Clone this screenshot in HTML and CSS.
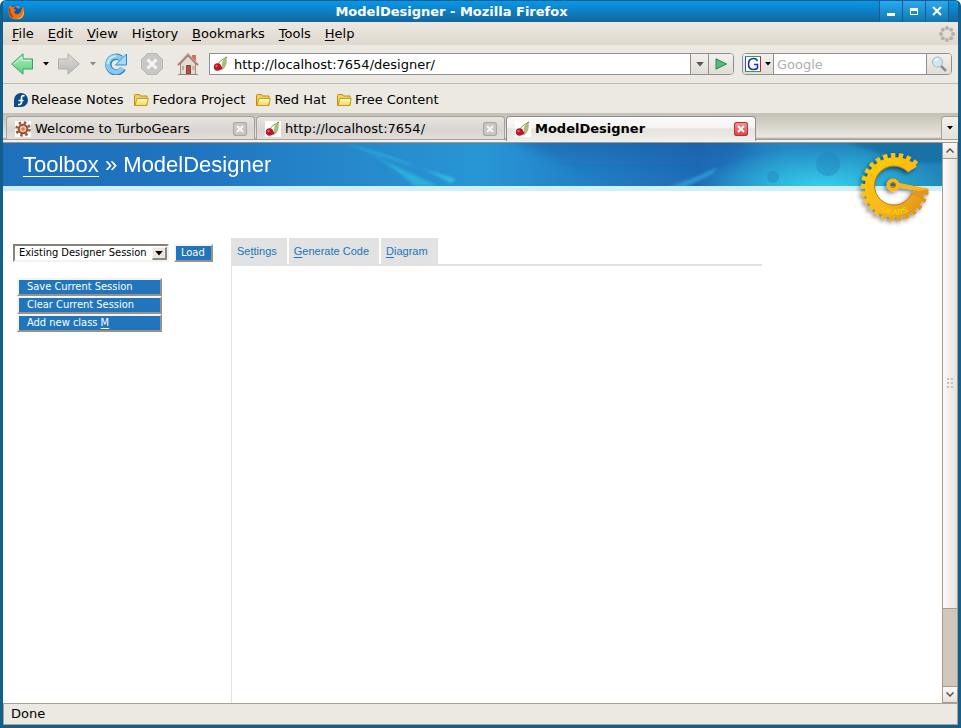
FILE: index.html
```html
<!DOCTYPE html>
<html lang="en">
<head>
  <meta charset="UTF-8">
  <meta name="viewport" content="width=device-width, initial-scale=1.0">
  <title>ModelDesigner - Mozilla Firefox</title>
  <link rel="stylesheet" href="styles.css">
</head>
<body>
  <!-- shared icons -->
  <svg class="defs" width="0" height="0" aria-hidden="true">
    <defs>
      <linearGradient id="green" x1="0" y1="0" x2="0" y2="1"><stop offset="0" stop-color="#a9f0bd"/><stop offset="1" stop-color="#5fce84"/></linearGradient>
      <linearGradient id="grey" x1="0" y1="0" x2="0" y2="1"><stop offset="0" stop-color="#dddcd9"/><stop offset="1" stop-color="#b9b8b5"/></linearGradient>
      <linearGradient id="folderFill" x1="0" y1="0" x2="0" y2="1"><stop offset="0" stop-color="#fffbd0"/><stop offset="1" stop-color="#f3d75c"/></linearGradient>
      <linearGradient id="gold" gradientUnits="userSpaceOnUse" x1="10" y1="10" x2="70" y2="66"><stop offset="0" stop-color="#ffc80c"/><stop offset="0.55" stop-color="#fdb913"/><stop offset="1" stop-color="#d98a1f"/></linearGradient>
      <filter id="shadow" x="-20%" y="-20%" width="150%" height="150%"><feDropShadow dx="-2" dy="2" stdDeviation="2" flood-color="#000" flood-opacity="0.5"/></filter>
      <symbol id="folder" viewBox="0 0 16 14">
        <path d="M1.500 12.500V2.500q0-1 1-1h4l1 1.500h6.500v9.500z" fill="#f2d35a" stroke="#c08a10"/>
        <path d="M2 12.500 4 5.500h11.300l-1.800 7z" fill="url(#folderFill)" stroke="#c99b17"/>
      </symbol>
      <symbol id="cherry" viewBox="0 0 16 16">
        <path d="M4.500 8.500C6 6 9 3.500 13 1.500" fill="none" stroke="#8f8a55" stroke-width="1"/>
        <path d="M13 1.500C9.500 4 8.500 8 9.500 13.500 13 10.500 14 6 13 1.500z" fill="#a9c077" stroke="#8aa552" stroke-width=".5"/>
        <path d="M12.500 2 13.500.500l1 1z" fill="#8b4a35"/>
        <circle cx="4.500" cy="11" r="3.700" fill="#c11425"/>
        <circle cx="7.700" cy="12" r="1.700" fill="#b51828"/>
        <circle cx="3.500" cy="10" r="1.200" fill="#e0606b"/>
      </symbol>
      <symbol id="tabclose" viewBox="0 0 14 14">
        <path d="M4 4l6 6M10 4l-6 6" fill="none" stroke="#f7f4f2" stroke-width="2.200"/>
      </symbol>
      <symbol id="caret" viewBox="0 0 6 4"><path d="M0 0h6L3 3.500z" fill="currentColor"/></symbol>
    </defs>
  </svg>

  <div class="window">
    <header class="titlebar">
      <svg class="fox" viewBox="0 0 16 16" width="16" height="16">
        <circle cx="8.500" cy="7" r="6.300" fill="#1a4f9c"/>
        <path d="M6 2q4-2 7 1l-2 2-2-1z" fill="#4a9be0"/>
        <path d="M1 3 2 1.500 4 3q2-1 3 0L5.500 5q2 0 2.500 1L6 8q1 3 4 2 3-1 3-4 2-2 1-4 3 3 2 7-2 6.500-8 6.500T.5 9Q0 6 1 3z" fill="#e8731a"/>
        <path d="M15 6q1 7-6 9 6 1 7-6z" fill="#fbc02d"/>
        <path d="M1.500 4.500Q1 10 5 13" fill="none" stroke="#b8320f" stroke-width="1.500"/>
      </svg>
      <h1 class="window-title">ModelDesigner - Mozilla Firefox</h1>
      <div class="window-buttons">
        <button class="window-button" aria-label="Minimize"><svg viewBox="0 0 22 21" width="22" height="21"><path d="M7 13.500h8" stroke="#fff" stroke-width="3"/></svg></button>
        <button class="window-button" aria-label="Maximize"><svg viewBox="0 0 22 21" width="22" height="21"><path d="M7.500 7.500h7v6h-7z" fill="none" stroke="#fff"/><path d="M7 8.500h8" stroke="#fff" stroke-width="3"/></svg></button>
        <button class="window-button" aria-label="Close"><svg viewBox="0 0 22 21" width="22" height="21"><path d="M7 6l8 8M15 6l-8 8" stroke="#fff" stroke-width="2"/></svg></button>
      </div>
    </header>

    <nav class="menubar">
      <button class="menu-item"><u>F</u>ile</button>
      <button class="menu-item"><u>E</u>dit</button>
      <button class="menu-item"><u>V</u>iew</button>
      <button class="menu-item">Hi<u>s</u>tory</button>
      <button class="menu-item"><u>B</u>ookmarks</button>
      <button class="menu-item"><u>T</u>ools</button>
      <button class="menu-item"><u>H</u>elp</button>
      <svg class="throbber" viewBox="0 0 16 16" width="16" height="16" fill="#b3b0aa">
        <circle cx="8" cy="2" r="2"/><circle cx="12.200" cy="3.800" r="2"/><circle cx="14" cy="8" r="2"/><circle cx="12.200" cy="12.200" r="2"/>
        <circle cx="8" cy="14" r="2"/><circle cx="3.800" cy="12.200" r="2"/><circle cx="2" cy="8" r="2"/><circle cx="3.800" cy="3.800" r="2"/>
      </svg>
    </nav>

    <div class="navbar">
      <button class="tool" aria-label="Back"><svg viewBox="0 0 22 22" width="22" height="22"><path d="M.700 11 12 .800V6h9.500v10H12v5.200z" fill="url(#green)" stroke="#35a35c"/><path d="M3 11l8-7v3.500h9" fill="none" stroke="#d3fadd"/></svg></button>
      <button class="tool tool-caret" aria-label="Back history"><svg width="6" height="4"><use href="#caret"/></svg></button>
      <button class="tool" aria-label="Forward"><svg viewBox="0 0 22 22" width="22" height="22"><path d="M21.300 11 10 .800V6H.500v10H10v5.200z" fill="url(#grey)" stroke="#b0aeaa"/></svg></button>
      <button class="tool tool-caret disabled" aria-label="Forward history"><svg width="6" height="4"><use href="#caret"/></svg></button>
      <button class="tool reload" aria-label="Reload"><svg viewBox="0 0 22 22" width="22" height="22">
        <path d="M16 5.500A7.800 7.800 0 1 0 18 15.500" fill="none" stroke="#3488c6" stroke-width="6.500"/>
        <path d="M16 5.500A7.800 7.800 0 1 0 17.500 15" fill="none" stroke="#89c9f3" stroke-width="4.500"/>
        <path d="M21.500 1v11H10.500z" fill="#a5dafa" stroke="#3488c6"/>
        <path d="M3 11a8 8 0 0 1 8-8" fill="none" stroke="#d5efff" stroke-width="1.500"/></svg></button>
      <button class="tool stop" aria-label="Stop"><svg viewBox="0 0 22 22" width="22" height="22"><path d="M6.500.500h9l6 6v9l-6 6h-9l-6-6v-9z" fill="#c9c8c5" stroke="#b7b5b1"/><path d="M6.500 6.500l9 9M15.500 6.500l-9 9" stroke="#f5f4f2" stroke-width="3"/></svg></button>
      <button class="tool home" aria-label="Home"><svg viewBox="0 0 22 22" width="22" height="22">
        <path d="M15 2h4v6h-4z" fill="#dc6a60"/>
        <path d="M3.500 11 11 3l7.500 8v10.500h-15z" fill="#e8d9cf" stroke="#a58c80"/>
        <path d="M1 12 11 1.500 21 12" fill="none" stroke="#9a7c6e" stroke-width="2"/>
        <path d="M1.500 10.500 11 .800l9.500 9.700" fill="none" stroke="#d9c5ba" stroke-width=".8"/>
        <path d="M9.500 12.500h4v8.500h-4z" fill="#b34d45" stroke="#6e5048"/><path d="M5 13h2v4H5zM15.500 13h2v4h-2z" fill="#bfa99d"/><path d="M1 21.500h20" stroke="#8d867c"/></svg></button>
      <form class="location">
        <svg class="location-icon" width="16" height="16"><use href="#cherry"/></svg>
        <input class="field" type="text" value="http://localhost:7654/designer/" aria-label="Location">
        <button class="field-button drop" type="button" aria-label="Show history"><svg width="8" height="5"><use href="#caret"/></svg></button>
        <button class="field-button go" type="button" aria-label="Go"><svg viewBox="0 0 12 12" width="12" height="12"><path d="M1 .800 11.500 6 1 11.200z" fill="#5cb87c" stroke="#238a4a"/></svg></button>
      </form>
      <form class="search">
        <button class="field-button engine" type="button" aria-label="Search engine">
          <svg viewBox="0 0 16 16" width="16" height="16"><path d="M0 0h16v16H0z" fill="#fff"/><path d="M.500 0v16" stroke="#1b57d6"/><path d="M0 .500h16M0 15.500h16" stroke="#34a53a"/><path d="M15.500 1v14" stroke="#c81e1e"/><path d="M12.500 5Q11.500 2.500 8.500 2.500 3.500 2.500 3.500 8T8.500 13.500Q11.500 13.500 12.500 12V8.500H9" fill="none" stroke="#1a35b0" stroke-width="1.600"/></svg>
          <svg width="6" height="4"><use href="#caret"/></svg>
        </button>
        <input class="field" type="text" placeholder="Google" aria-label="Search">
        <button class="field-button lens" type="button" aria-label="Search"><svg viewBox="0 0 16 16" width="16" height="16"><path d="M10 10l5 5" stroke="#8d8d8d" stroke-width="2.500"/><circle cx="6.500" cy="6" r="5" fill="#cfe8f6" stroke="#a6b4bb"/><path d="M4 5q1-2 3-2" fill="none" stroke="#fff" stroke-width="1.500"/></svg></button>
      </form>
    </div>

    <div class="bookmarks">
      <a class="bookmark" href="#"><svg viewBox="0 0 14 14" width="14" height="14"><path d="M7 0a7 7 0 1 1 0 14H0V7a7 7 0 0 1 7-7z" fill="#0b4a86"/><path d="M10.500 3Q7.500 1.800 7.500 5v4q0 3-3.500 2.500M4.500 7.500h5" fill="none" stroke="#fff" stroke-width="1.700"/></svg>Release Notes</a>
      <a class="bookmark" href="#"><svg width="16" height="14"><use href="#folder"/></svg>Fedora Project</a>
      <a class="bookmark" href="#"><svg width="16" height="14"><use href="#folder"/></svg>Red Hat</a>
      <a class="bookmark" href="#"><svg width="16" height="14"><use href="#folder"/></svg>Free Content</a>
    </div>

    <div class="tabs">
      <div class="tab">
        <svg viewBox="0 0 16 16" width="16" height="16"><path d="M0 0h16v16H0z" fill="#fff"/><circle cx="8" cy="8" r="6.500" fill="none" stroke="#9a5a3a" stroke-width="2.500" stroke-dasharray="2.550 2.550"/><circle cx="8" cy="8" r="4.300" fill="#e5c9b5" stroke="#935132" stroke-width="2"/><circle cx="8" cy="8" r="1.800" fill="#df7b32"/></svg>
        <button class="tab-label">Welcome to TurboGears</button>
        <button class="tab-close" aria-label="Close tab"><svg width="14" height="14"><use href="#tabclose"/></svg></button>
      </div>
      <div class="tab">
        <svg class="favicon" width="16" height="16"><use href="#cherry"/></svg>
        <button class="tab-label">http://localhost:7654/</button>
        <button class="tab-close" aria-label="Close tab"><svg width="14" height="14"><use href="#tabclose"/></svg></button>
      </div>
      <div class="tab active">
        <svg class="favicon" width="16" height="16"><use href="#cherry"/></svg>
        <button class="tab-label">ModelDesigner</button>
        <button class="tab-close" aria-label="Close tab"><svg width="14" height="14"><use href="#tabclose"/></svg></button>
      </div>
      <button class="all-tabs" aria-label="List all tabs"><svg width="6" height="4"><use href="#caret"/></svg></button>
    </div>

    <div class="viewport">
      <main class="page">
        <div class="banner">
          <svg class="banner-art" viewBox="0 0 939 43" preserveAspectRatio="none" aria-hidden="true">
            <defs>
              <linearGradient id="sea"><stop offset="0" stop-color="#1e70ba"/><stop offset=".2" stop-color="#1f74bf"/><stop offset=".36" stop-color="#2687ca"/><stop offset=".51" stop-color="#2896d5"/><stop offset=".62" stop-color="#2280c5"/><stop offset=".74" stop-color="#1e6bb5"/><stop offset=".83" stop-color="#2487c4"/><stop offset="1" stop-color="#2185ba"/></linearGradient>
              <radialGradient id="glow"><stop offset="0" stop-color="#35d2ec"/><stop offset="1" stop-color="#35d2ec" stop-opacity="0"/></radialGradient>
              <linearGradient id="deep" x1="0" y1="0" x2="0" y2="1"><stop offset="0" stop-color="#175ca8" stop-opacity=".6"/><stop offset="1" stop-color="#175ca8" stop-opacity="0"/></linearGradient>
              <filter id="soft"><feGaussianBlur stdDeviation="1.500"/></filter>
              <filter id="softer"><feGaussianBlur stdDeviation="8 3"/></filter>
            </defs>
            <rect width="939" height="43" fill="url(#sea)"/>
            <path d="M510-4h240l-20 30-150 8z" fill="url(#deep)" filter="url(#softer)"/>
            <ellipse cx="820" cy="45" rx="125" ry="42" fill="url(#glow)"/>
            <g filter="url(#soft)">
              <path d="M340 0Q400 20 453 36L448 40Q410 18 340 0z" fill="#35cfe8" opacity=".75"/>
              <path d="M345 1Q390 22 435 43H412Q385 18 345 1z" fill="#30c5e5" opacity=".6"/>
              <path d="M665 44Q690 36 715 24L708 32 682 44z" fill="#37b4e0" opacity=".6"/>
              <path d="M840-2h102v22H905z" fill="#176696" opacity=".6"/>
            </g>
            <circle cx="825" cy="21" r="12" fill="#217fb9" opacity=".4"/>
            <circle cx="770" cy="34" r="6" fill="#217fb9" opacity=".4"/>
          </svg>
          <h2 class="page-title"><a href="#">Toolbox</a> » ModelDesigner</h2>
          <svg class="logo" viewBox="0 0 80 80" width="80" height="80" role="img" aria-label="Turbo Gears">
            <g filter="url(#shadow)">
              <path d="M61.500 16A31.500 31.500 0 1 0 71 44" fill="none" stroke="url(#gold)" stroke-width="5" stroke-dasharray="4.300 3.500"/>
              <path d="M62 18.500 53 24A19.500 19.500 0 1 0 57 45L70 44A30.200 30.200 0 1 1 62 18.500z" fill="url(#gold)"/>
              <path d="M43 35.500 73.500 41v5.500l-5-.500-1.500 4-11-3 4-5-17-3z" fill="#dd9720"/>
              <path d="M42 34.500 73.500 41 64 43 42 39z" fill="#fcb515"/>
              <circle cx="38" cy="37" r="4.500" fill="none" stroke="#fcb515" stroke-width="4"/>
              <path d="M53 24A19.500 19.500 0 1 0 57 45" fill="none" stroke="#bd7816"/>
              <circle cx="38" cy="37" r="2.500" fill="none" stroke="#a86a12"/>
            </g>
            <path id="turboPath" d="M19.500 28A23 23 0 0 1 53 19.500" fill="none"/>
            <path id="gearsPath" d="M26 63A28 28 0 0 0 66 50" fill="none"/>
            <text class="logo-text"><textPath href="#turboPath">TURBO</textPath></text>
            <text class="logo-text"><textPath href="#gearsPath">GEARS</textPath></text>
          </svg>
        </div>

        <div class="designer">
          <aside class="sidebar">
            <form class="session">
              <div class="select-box">
                <select aria-label="Existing Designer Session"><option>Existing Designer Session</option></select>
                <span class="select-arrow"><svg width="8" height="5"><use href="#caret"/></svg></span>
              </div>
              <button class="btn" type="button">Load</button>
            </form>
            <div class="actions">
              <button class="btn">Save Current Session</button>
              <button class="btn">Clear Current Session</button>
              <button class="btn">Add new class <u>M</u></button>
            </div>
          </aside>
          <section class="panel">
            <nav class="panel-tabs">
              <a href="#">Se<u>t</u>tings</a>
              <a href="#"><u>G</u>enerate Code</a>
              <a href="#"><u>D</u>iagram</a>
            </nav>
          </section>
        </div>
      </main>

      <div class="scrollbar">
        <button class="scroll-button" aria-label="Scroll up"><svg viewBox="0 0 8 5" width="8" height="5"><path d="M.500 4.500 4 1l3.500 3.500" fill="none" stroke="#555" stroke-width="1.500"/></svg></button>
        <div class="scroll-track">
          <div class="scroll-thumb"><svg viewBox="0 0 6 10" width="6" height="10" fill="#c5c0b8"><path d="M0 0h2v2H0zM4 0h2v2H4zM0 4h2v2H0zM4 4h2v2H4zM0 8h2v2H0zM4 8h2v2H4z"/></svg></div>
        </div>
        <button class="scroll-button" aria-label="Scroll down"><svg viewBox="0 0 8 5" width="8" height="5"><path d="M.500.500 4 4 7.500.500" fill="none" stroke="#555" stroke-width="1.500"/></svg></button>
      </div>
    </div>

    <footer class="statusbar">Done</footer>
  </div>
</body>
</html>
```

FILE: styles.css
```css
* {
  margin: 0;
  padding: 0;
  box-sizing: border-box;
}

body {
  font-family: "DejaVu Sans", Verdana, sans-serif;
  font-size: 13px;
  line-height: 16px;
  color: #000;
  background: #fff;
}

button,
input,
select {
  font: inherit;
  color: inherit;
  background: none;
  border: none;
  border-radius: 0;
  outline: none;
}

a {
  color: inherit;
  text-decoration: none;
}

svg {
  display: block;
  flex: none;
}

u {
  text-underline-offset: 2px;
  text-decoration-thickness: 1px;
}

.defs {
  position: absolute;
}

.window {
  height: 100vh;
  display: flex;
  flex-direction: column;
  background: #ece9e2;
  border: 3px solid #135f8c;
  border-top-width: 1px;
  border-radius: 6px 6px 0 0;
  overflow: hidden;
}

/* title bar */
.titlebar {
  height: 21px;
  flex: none;
  display: flex;
  align-items: center;
  padding: 0 9px 0 5px;
  background: linear-gradient(#0797ea, #14669a);
}

.window-title {
  flex: 1;
  text-align: center;
  font-size: 13px;
  font-weight: bold;
  color: #fff;
}

.window-buttons {
  display: flex;
  border-right: 1px solid #125f8e;
}

.window-button {
  width: 23px;
  height: 21px;
  border-left: 1px solid #125f8e;
  background: linear-gradient(#2aa9f4, #1376ad);
}

/* menu */
.menubar {
  height: 23px;
  flex: none;
  display: flex;
  align-items: center;
  gap: 14px;
  padding: 0 3px 0 9px;
  background: linear-gradient(#ece8e2, #dfd8cd);
}

.throbber {
  margin-left: auto;
}

/* navigation */
.navbar {
  height: 39px;
  flex: none;
  display: flex;
  align-items: center;
  padding: 0 6px 0 8px;
  border-bottom: 1px solid #bfbcb5;
}

.tool-caret {
  width: 25px;
  display: flex;
  justify-content: center;
}

.disabled {
  color: #888;
}

.stop {
  margin: 0 14px;
}

.home {
  margin-right: 10px;
}

.location,
.search {
  display: flex;
  height: 22px;
  background: #fff;
  border: 1px solid #8e8f92;
}

.location {
  flex: 1;
  align-items: center;
  margin-right: 8px;
  border-radius: 0 4px 4px 0;
}

.location-icon {
  margin: 0 5px 0 3px;
}

.search {
  width: 210px;
  border-radius: 4px;
}

.field {
  flex: 1;
  min-width: 0;
  height: 20px;
}

.search .field {
  padding: 0 3px;
}

.field::placeholder {
  color: #b0aeae;
  opacity: 1;
}

.field-button {
  height: 20px;
  display: flex;
  align-items: center;
  justify-content: center;
  gap: 4px;
  background: linear-gradient(#f3f1ed, #e0ddd6);
  border-left: 1px solid #8e8f92;
}

.drop {
  width: 18px;
  color: #555;
}

.go {
  width: 25px;
  border-radius: 0 3px 3px 0;
}

.engine {
  width: 31px;
  border-left: none;
  border-right: 1px solid #8e8f92;
  border-radius: 3px 0 0 3px;
}

.lens {
  width: 25px;
  border-radius: 0 3px 3px 0;
}

/* bookmarks */
.bookmarks {
  height: 29px;
  flex: none;
  display: flex;
  align-items: center;
  gap: 10px;
  padding: 2px 11px 0;
}

.bookmark {
  display: flex;
  align-items: center;
  gap: 3px;
}

/* browser tabs */
.tabs {
  height: 30px;
  flex: none;
  display: flex;
  align-items: flex-end;
  gap: 1px;
  padding: 3px 0 2px 3px;
  background: linear-gradient(#c3bfb5, #eae7e0 24px, #a8a198 26px, #a8a198 27px, #f3f1ec 27px, #f3f1ec 29px, #a3958a 29px);
}

.tab {
  width: 249px;
  height: 23px;
  margin-bottom: 2px;
  display: flex;
  align-items: center;
  gap: 4px;
  padding: 1px 7px 0 8px;
  background: linear-gradient(#e7e4df, #d8d5d0 60%, #e2dfda);
  border: 1px solid #a5a29b;
  border-bottom: none;
  border-radius: 4px 4px 0 0;
}

.tab.active {
  width: 250px;
  height: 25px;
  margin-bottom: 0;
  padding-bottom: 1px;
  font-weight: bold;
  background: linear-gradient(#fbfbfa, #f4f3f1 45%, #e5e3de 50%, #f0eee9);
  border-color: #8e8f92;
}

.favicon {
  background: #fff;
}

.tab-label {
  flex: 1;
  text-align: left;
}

.tab-close {
  width: 14px;
  height: 14px;
  background: #c8c6c1;
  border-radius: 3px;
  box-shadow: inset 0 0 0 1px #a8a6a1;
}

.active .tab-close {
  background: linear-gradient(#f19a9c, #df3c43);
  box-shadow: inset 0 0 0 1px #b5333a;
}

.all-tabs {
  width: 17px;
  height: 23px;
  margin-left: auto;
  margin-bottom: 2px;
  display: flex;
  align-items: center;
  justify-content: center;
  background: linear-gradient(#f2f0ec, #e4e1da);
  border: 1px solid #a5a29b;
  border-width: 1px 0 0 1px;
  border-radius: 4px 0 0 0;
}

/* page */
.viewport {
  flex: 1;
  min-height: 0;
  display: flex;
}

.page {
  flex: 1;
  min-width: 0;
  display: flex;
  flex-direction: column;
  background: #fff;
}

.banner {
  position: relative;
  height: 48px;
  flex: none;
  background: #1e70ba;
  border-bottom: 5px solid #d0effc;
}

.banner-art {
  position: absolute;
  width: 100%;
  height: 43px;
}

.page-title {
  position: relative;
  padding: 10px 20px 0;
  font-family: "Liberation Sans", Arial, sans-serif;
  font-size: 22px;
  line-height: 23px;
  font-weight: normal;
  color: #fff;
}

.page-title a {
  display: inline-block;
  border-bottom: 1px solid #fff;
}

.logo {
  position: absolute;
  top: 5px;
  right: 7px;
}

.logo-text {
  font-family: "Liberation Sans", Arial, sans-serif;
  font-size: 8px;
  font-weight: bold;
  fill: #f2d20c;
}

.designer {
  flex: 1;
  display: flex;
  padding-top: 47px;
}

.sidebar {
  width: 228px;
  padding: 6px 10px 0;
  font-family: "DejaVu Sans Condensed", "DejaVu Sans", sans-serif;
  font-stretch: condensed;
  font-size: 11px;
  line-height: 13px;
}

.session {
  display: flex;
  gap: 5px;
  margin-bottom: 16px;
}

.select-box {
  position: relative;
  width: 156px;
}

.select-box select {
  width: 100%;
  height: 18px;
  padding: 0 4px 1px;
  appearance: none;
  border: 2px solid #85817a;
  border-right-color: #f5f3ef;
  border-bottom-color: #f5f3ef;
}

.select-arrow {
  position: absolute;
  top: 3px;
  right: 2px;
  width: 15px;
  height: 13px;
  display: flex;
  align-items: center;
  justify-content: center;
  background: #ebe6e0;
  border: 1px solid #f8f6f2;
  border-right: 2px solid #8d8780;
  border-bottom: 2px solid #8d8780;
  pointer-events: none;
}

.btn {
  height: 18px;
  padding: 0 6px 1px 5px;
  text-align: left;
  color: #fff;
  background: #2075bd;
  border: 2px solid #f4f3f0;
  border-right-color: #97918a;
  border-bottom-color: #97918a;
}

.actions {
  width: 145px;
  margin-left: 4px;
  display: flex;
  flex-direction: column;
}

.actions .btn {
  padding-left: 8px;
}

.panel {
  flex: 1;
  border-left: 1px solid #e2e2e2;
}

.panel-tabs {
  max-width: 530px;
  display: flex;
  gap: 2px;
  font-family: "Liberation Sans", Arial, sans-serif;
  font-size: 11px;
  line-height: 26px;
  color: #2075bd;
  border-bottom: 2px solid #e2e2e2;
}

.panel-tabs a {
  padding: 0 10px 0 5px;
  background: #e2e2e2;
}

/* scrollbar */
.scrollbar {
  width: 16px;
  display: flex;
  flex-direction: column;
  border: 1px solid #a59b90;
  border-top: none;
}

.scroll-button {
  height: 15px;
  flex: none;
  display: flex;
  align-items: center;
  justify-content: center;
  background: linear-gradient(#fbfaf9, #e6e3dd);
}

.scroll-track {
  flex: 1;
  background: #d0c8bb;
  border: 1px solid #a59b90;
  border-width: 1px 0;
}

.scroll-thumb {
  height: 85.3%;
  display: flex;
  align-items: center;
  justify-content: center;
  background: linear-gradient(90deg, #fbfaf9, #e6e3dd);
  border-bottom: 1px solid #a59b90;
}

/* status */
.statusbar {
  height: 22px;
  flex: none;
  padding: 2px 7px;
  border: 1px solid #aaa195;
}
```
